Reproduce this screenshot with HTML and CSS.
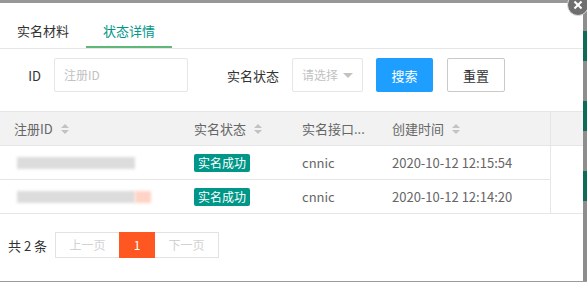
FILE: index.html
```html
<!DOCTYPE html>
<html lang="zh-CN">
<head>
  <meta charset="UTF-8">
  <title>状态详情</title>
  <link rel="stylesheet" href="styles.css">
</head>
<body>
  <div class="topbar"></div>
  <div class="stage">
    <div class="layer">
      <ul class="tab-title">
        <li>实名材料</li>
        <li class="this">状态详情</li>
      </ul>

      <form class="filter">
        <label class="lbl lbl-id">ID</label>
        <div class="input">注册ID</div>
        <label class="lbl lbl-status">实名状态</label>
        <div class="select">请选择<i class="caret"></i></div>
        <button type="button" class="btn btn-blue">搜索</button>
        <button type="button" class="btn btn-plain">重置</button>
      </form>

      <div class="table">
        <div class="thead">
          <div class="cell c1">注册ID <i class="sort"></i></div>
          <div class="cell c2">实名状态 <i class="sort"></i></div>
          <div class="cell c3">实名接口...</div>
          <div class="cell c4">创建时间 <i class="sort"></i></div>
          <div class="patch"></div>
        </div>
        <div class="tbody">
          <div class="rows">
            <div class="tr">
              <div class="cell c1"><span class="blur"></span></div>
              <div class="cell c2"><span class="tag">实名成功</span></div>
              <div class="cell c3">cnnic</div>
              <div class="cell c4">2020-10-12 12:15:54</div>
            </div>
            <div class="tr">
              <div class="cell c1"><span class="blur"></span><span class="blur blur-pink"></span></div>
              <div class="cell c2"><span class="tag">实名成功</span></div>
              <div class="cell c3">cnnic</div>
              <div class="cell c4">2020-10-12 12:14:20</div>
            </div>
          </div>
        </div>
      </div>

      <div class="pager">
        <span class="count">共 2 条</span>
        <div class="pages">
          <a class="prev">上一页</a>
          <a class="curr">1</a>
          <a class="next">下一页</a>
        </div>
      </div>
    </div>
    <div class="backdrop">
      <i></i><i></i><i></i>
    </div>
  </div>
  <div class="bottombar"></div>
  <span class="close"></span>
</body>
</html>
```

FILE: styles.css
```css
* { box-sizing: border-box; }
body { margin: 0; width: 587px; height: 282px; overflow: hidden; background: #fff; font-family: "Noto Sans CJK SC", "Noto Sans", sans-serif; font-size: 13px; color: #666; display: flex; flex-direction: column; position: relative; }
.topbar { height: 3px; background: #979797; flex: none; }
.bottombar { height: 1px; background: #9a9a9a; flex: none; }
.stage { flex: 1; display: flex; min-height: 0; }
.layer { flex: 1; background: #fff; }
.backdrop { width: 4px; background: #8d8d8d; display: flex; flex-direction: column; padding-top: 28px; gap: 40px; }
.backdrop i { display: block; height: 30px; background: #0f6b55; }

/* close button, sits over the corner of the layer */
.close { position: absolute; left: 567px; top: -6px; width: 22px; height: 22px; border-radius: 50%; background: #6f6f6f; border: 1px solid #ddd; }
.close::before, .close::after { content: ""; position: absolute; left: 5px; top: 9px; width: 10px; height: 2px; background: #fff; transform: rotate(45deg); }
.close::after { transform: rotate(-45deg); }

.tab-title { list-style: none; margin: 9px 0 0; padding: 0; display: flex; height: 37px; border-bottom: 1px solid #e6e6e6; }
.tab-title li { width: 86px; height: 36px; line-height: 38px; text-align: center; color: #333; }
.tab-title li.this { color: #009688; border-bottom: 2px solid #5fb878; }

.filter { display: flex; align-items: center; height: 34px; margin-top: 9px; }
.lbl { color: #333; text-align: right; }
.lbl-id { width: 41px; margin-right: 13px; }
.lbl-status { width: 91px; margin-right: 13px; }
.input { width: 134px; height: 34px; border: 1px solid #e6e6e6; border-radius: 2px; padding-left: 9px; line-height: 32px; color: #c2c2c2; font-size: 12px; }
.select { width: 71px; height: 34px; border: 1px solid #e6e6e6; border-radius: 2px; padding-left: 9px; line-height: 32px; color: #c2c2c2; font-size: 12px; position: relative; }
.caret { position: absolute; right: 9px; top: 14px; border: 5px solid transparent; border-top: 5px solid #c2c2c2; }
.btn { height: 34px; border-radius: 2px; font-family: inherit; font-size: 13px; padding: 0; cursor: pointer; }
.btn-blue { width: 57px; margin-left: 13px; background: #1e9fff; color: #fff; border: none; }
.btn-plain { width: 58px; margin-left: 14px; background: #fff; color: #333; border: 1px solid #c9c9c9; }

.table { margin-top: 19px; border-top: 1px solid #e6e6e6; border-bottom: 1px solid #e6e6e6; }
.thead { display: flex; height: 34px; background: #f2f2f2; border-bottom: 1px solid #e6e6e6; }
.cell { display: flex; align-items: center; padding-left: 14px; white-space: nowrap; }
.c1 { width: 180px; }
.c2 { width: 108px; }
.c3 { width: 90px; }
.c4 { width: 172px; }
.patch { flex: 1; border-left: 1px solid #e6e6e6; }
.sort { display: inline-block; width: 8px; height: 10px; margin-left: 8px; position: relative; }
.sort::before, .sort::after { content: ""; position: absolute; left: 0; border: 4px solid transparent; }
.sort::before { top: -4px; border-bottom-color: #c2c2c2; }
.sort::after { bottom: -4px; border-top-color: #c2c2c2; }

.tbody { display: flex; }
.rows { width: 551px; border-right: 1px solid #e6e6e6; }
.tr { display: flex; height: 34px; border-bottom: 1px solid #e6e6e6; }
.tr:last-child { border-bottom: none; height: 33px; }
.blur { display: inline-block; width: 118px; height: 12px; background: #dcdcdc; filter: blur(1.5px); margin-left: 3px; }
.blur-pink { width: 16px; margin-left: 0; background: #ffd3c6; }
.tag { background: #009688; color: #fff; padding: 0 4px; height: 18px; line-height: 18px; border-radius: 2px; font-size: 12px; }

.pager { display: flex; align-items: center; padding: 18px 0 0 8px; }
.count { color: #333; margin-right: 8px; }
.pages { display: flex; border: 1px solid #e2e2e2; height: 26px; }
.pages a { display: block; height: 24px; line-height: 24px; text-align: center; color: #d2d2d2; font-size: 12px; }
.prev, .next { width: 63px; }
.curr { width: 36px; background: #ff5722; color: #fff !important; margin: -1px 0; height: 26px !important; line-height: 26px !important; }
```
